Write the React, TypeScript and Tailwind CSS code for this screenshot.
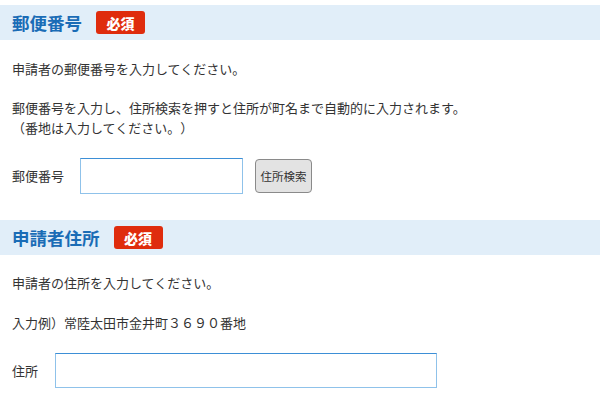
import React from 'react';

const font = { fontFamily: '"Noto Sans CJK JP", "Noto Sans", sans-serif' };

const SectionHeader: React.FC<{ title: string }> = ({ title }) => (
  <div className="flex h-[35px] items-center bg-[#e1eef9] px-3">
    <h2 className="text-[17.5px] font-bold leading-none text-[#1a6cb6]">{title}</h2>
    <span className="ml-[14px] flex h-[23px] w-[49px] items-center justify-center rounded-[3px] bg-[#df2c0d] text-[14px] font-black leading-none text-white">
      必須
    </span>
  </div>
);

const App: React.FC = () => {
  return (
    <div className="h-[407px] w-[600px] overflow-hidden bg-white text-[13px] leading-[20px] text-[#333] [text-spacing-trim:space-all]" style={font}>
      <div className="pt-[5px]">
        <SectionHeader title="郵便番号" />
        <div className="px-3">
          <p className="mt-[19px]">申請者の郵便番号を入力してください。</p>
          <p className="mt-[19px]">
            郵便番号を入力し、住所検索を押すと住所が町名まで自動的に入力されます。
            <br />
            （番地は入力してください。）
          </p>
          <div className="mt-[20px] flex items-center">
            <label className="w-[68px]">郵便番号</label>
            <input
              type="text"
              className="h-[36px] w-[163px] border border-[#8fc2ea] border-t-[#3d8fd6] bg-white outline-none"
            />
            <button className="ml-3 h-[34px] w-[57px] rounded-[4px] border border-[#8a8a8a] bg-[#e3e3e3] text-[11.5px] text-[#333]">
              住所検索
            </button>
          </div>
        </div>
      </div>
      <div className="mt-[26px]">
        <SectionHeader title="申請者住所" />
        <div className="px-3">
          <p className="mt-[18px]">申請者の住所を入力してください。</p>
          <p className="mt-[20px]">入力例）常陸太田市金井町３６９０番地</p>
          <div className="mt-[20px] flex items-center">
            <label className="w-[43px]">住所</label>
            <input
              type="text"
              className="h-[35px] w-[382px] border border-[#8fc2ea] border-t-[#3d8fd6] bg-white outline-none"
            />
          </div>
        </div>
      </div>
    </div>
  );
};

export default App;
